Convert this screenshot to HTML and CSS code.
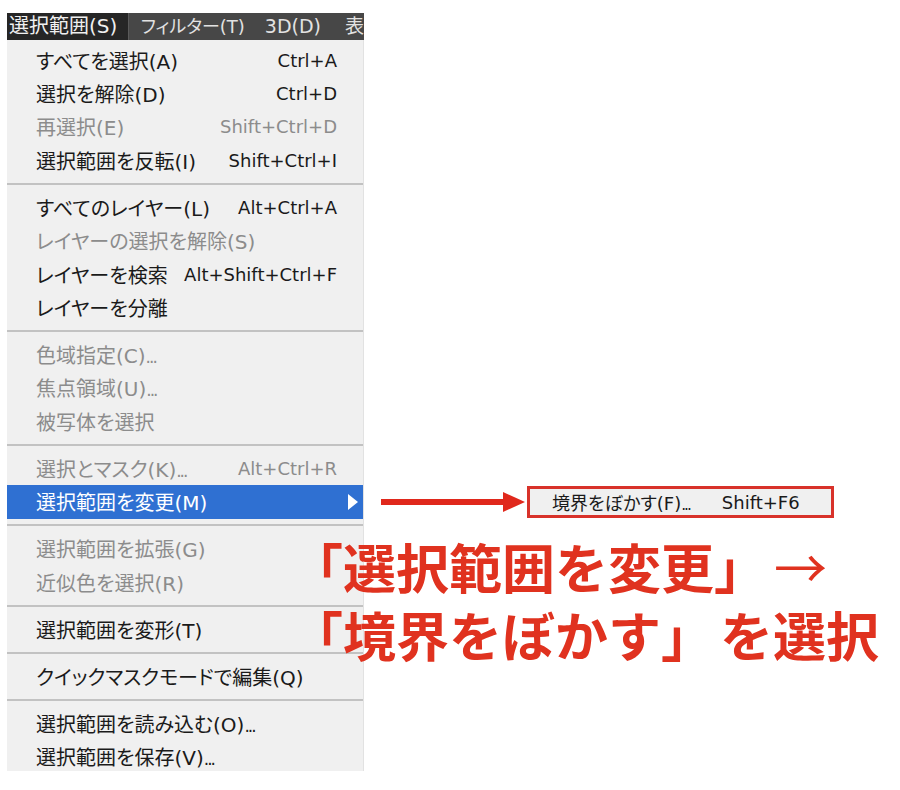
FILE: index.html
```html
<!DOCTYPE html>
<html lang="ja">
<head>
<meta charset="utf-8">
<link rel="stylesheet" href="styles.css">
</head>
<body>
<div class="menu">
  <div class="menubar">
    <span class="mb-item mb-active">選択範囲(S)</span>
    <span class="mb-item mb-filter">フィルター(T)</span>
    <span class="mb-item mb-3d">3D(D)</span>
    <span class="mb-item mb-last">表</span>
  </div>
  <div class="dropdown">
    <div class="row"><span>すべてを選択(A)</span><span class="sc">Ctrl+A</span></div>
    <div class="row"><span>選択を解除(D)</span><span class="sc">Ctrl+D</span></div>
    <div class="row dis"><span>再選択(E)</span><span class="sc">Shift+Ctrl+D</span></div>
    <div class="row"><span>選択範囲を反転(I)</span><span class="sc">Shift+Ctrl+I</span></div>
    <div class="sep"></div>
    <div class="row"><span>すべてのレイヤー(L)</span><span class="sc">Alt+Ctrl+A</span></div>
    <div class="row dis"><span>レイヤーの選択を解除(S)</span></div>
    <div class="row"><span>レイヤーを検索</span><span class="sc">Alt+Shift+Ctrl+F</span></div>
    <div class="row"><span>レイヤーを分離</span></div>
    <div class="sep"></div>
    <div class="row dis"><span>色域指定(C)<span class="ell">...</span></span></div>
    <div class="row dis"><span>焦点領域(U)<span class="ell">...</span></span></div>
    <div class="row dis"><span>被写体を選択</span></div>
    <div class="sep"></div>
    <div class="row dis"><span>選択とマスク(K)<span class="ell">...</span></span><span class="sc">Alt+Ctrl+R</span></div>
    <div class="row hl"><span>選択範囲を変更(M)</span><svg class="tri" width="10" height="16" viewBox="0 0 10 16"><polygon points="0,0 10,8 0,16" fill="#ffffff"/></svg></div>
    <div class="sep"></div>
    <div class="row dis"><span>選択範囲を拡張(G)</span></div>
    <div class="row dis"><span>近似色を選択(R)</span></div>
    <div class="sep"></div>
    <div class="row"><span>選択範囲を変形(T)</span></div>
    <div class="sep"></div>
    <div class="row"><span>クイックマスクモードで編集(Q)</span></div>
    <div class="sep"></div>
    <div class="row"><span>選択範囲を読み込む(O)<span class="ell">...</span></span></div>
    <div class="row"><span>選択範囲を保存(V)<span class="ell">...</span></span></div>
  </div>
</div>
<div class="annot">
  <div class="pointer">
    <svg class="arrow" width="146" height="24" viewBox="0 0 146 24">
      <rect x="0" y="9" width="126" height="6" fill="#e0281c"/>
      <polygon points="122,2 144,12 122,22" fill="#e0281c"/>
    </svg>
    <div class="sub">
      <span>境界をぼかす(F)<span class="ell">...</span></span><span class="sub-sc">Shift+F6</span>
    </div>
  </div>
  <div class="caption">
    <div class="cap-line">「選択範囲を変更」<span class="cap-arrow">→</span></div>
    <div class="cap-line">「境界をぼかす」<span class="cap-tail">を選択</span></div>
  </div>
</div>
</body>
</html>
```

FILE: styles.css
```css
html, body {
  margin: 0;
  padding: 0;
  background: #ffffff;
}
body {
  display: flex;
  align-items: flex-start;
  padding: 13px 0 0 7px;
  font-family: "DejaVu Sans", "Noto Sans CJK JP", sans-serif;
}
.menu {
  width: 357px;
  flex: none;
}
.menubar {
  height: 27px;
  background: #474747;
  display: flex;
  align-items: center;
  color: #e2e2e2;
  font-size: 19px;
  font-family: "DejaVu Sans", "Noto Sans CJK JP", sans-serif;
  font-feature-settings: "palt";
  white-space: nowrap;
  overflow: hidden;
}
.mb-item {
  line-height: 27px;
  height: 27px;
}
.mb-active {
  background: #262626;
  width: 123px;
  padding-left: 2px;
  border-right: 1px solid #5a5a5a;
  color: #f0f0f0;
  font-size: 20px;
  font-feature-settings: normal;
}
.mb-filter {
  margin-left: 12px;
  font-size: 18px;
}
.mb-3d { margin-left: 20px; }
.mb-last { margin-left: 24px; }
.dropdown {
  background: #f0f0f0;
  padding: 3.4px 0 0 0;
  height: 731px;
  box-sizing: border-box;
  border-right: 1px solid #e2e2e2;
}
.row {
  height: 33.4px;
  display: flex;
  align-items: center;
  justify-content: space-between;
  padding: 0 26px 0 29px;
  font-size: 20px;
  color: #1a1a1a;
  white-space: nowrap;
  font-family: "DejaVu Sans", "Noto Sans CJK JP", sans-serif;
  font-feature-settings: "palt";
}
.row .sc {
  font-size: 18px;
}
.ell {
  letter-spacing: -2px;
  font-size: 0.85em;
}
.row.dis {
  color: #8c8c8c;
}
.row.hl {
  background: #2f70d2;
  color: #ffffff;
  padding-right: 5px;
}
.tri {
  display: block;
}
.sep {
  height: 13.7px;
  display: flex;
  align-items: center;
}
.sep::before {
  content: "";
  display: block;
  width: 100%;
  height: 2px;
  background: #c2c2c2;
}
.annot {
  display: flex;
  flex-direction: column;
  margin-left: -74px;
  padding-top: 473px;
}
.pointer {
  display: flex;
  align-items: center;
  margin-left: 91px;
  height: 32px;
}
.arrow {
  display: block;
  flex: none;
}
.sub {
  width: 307px;
  height: 32px;
  box-sizing: border-box;
  border: 3px solid #d8322a;
  background: #f0f0f0;
  display: flex;
  align-items: center;
  padding-left: 22px;
  font-size: 18px;
  color: #1a1a1a;
  white-space: nowrap;
  font-family: "DejaVu Sans", "Noto Sans CJK JP", sans-serif;
  font-feature-settings: "palt";
}
.sub-sc {
  margin-left: 32px;
}
.caption {
  margin-top: 14px;
  color: #e0321f;
  font-family: "Noto Sans CJK JP", sans-serif;
  font-weight: 700;
  font-size: 53px;
  white-space: nowrap;
}
.cap-line {
  height: 68px;
  line-height: 68px;
}
.cap-arrow {
  font-weight: 400;
  margin-left: 7px;
}
.cap-tail {
  margin-left: 6px;
}
```
